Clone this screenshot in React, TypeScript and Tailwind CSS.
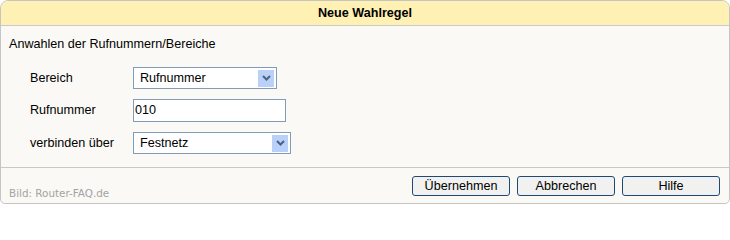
import React from 'react'

function ArrowBox() {
  return (
    <span className="w-[16px] h-[17px] bg-[#b9d1f9] flex items-center justify-center">
      <svg width="9" height="6" viewBox="0 0 9 6">
        <path d="M1 1 L4.5 4.5 L8 1" fill="none" stroke="#4d6185" strokeWidth="2" />
      </svg>
    </span>
  )
}

function FakeSelect({ value, width }: { value: string; width: string }) {
  return (
    <div
      className={`${width} h-[22px] border border-[#7f9db9] bg-white flex items-center justify-between pl-[6px] pr-[2px]`}
    >
      <span>{value}</span>
      <ArrowBox />
    </div>
  )
}

export default function App() {
  return (
    <div
      className="w-[730px] h-[204px] border border-[#c5c5c3] rounded-t-[8px] rounded-b-[5px] bg-[#faf9f5] flex flex-col overflow-hidden text-[12.6px] text-black"
      style={{ fontFamily: '"Liberation Sans", Arial, sans-serif' }}
    >
      {/* Header */}
      <div className="h-[25px] shrink-0 bg-[#fff0b3] border-b border-[#c8c8c6] flex items-center justify-center font-bold">
        Neue Wahlregel
      </div>

      {/* Body */}
      <div className="flex-1 pl-[8px] pt-[11px]">
        <p className="leading-[15px]">Anwahlen der Rufnummern/Bereiche</p>
        <div className="mt-[15px] pl-[21px] flex flex-col gap-[10px]">
          <div className="flex items-center">
            <span className="w-[103px]">Bereich</span>
            <FakeSelect value="Rufnummer" width="w-[144px]" />
          </div>
          <div className="flex items-center">
            <span className="w-[103px]">Rufnummer</span>
            <div className="w-[153px] h-[23px] border border-[#7f9db9] bg-white flex items-center pl-[1px]">
              010
            </div>
          </div>
          <div className="flex items-center">
            <span className="w-[103px]">verbinden über</span>
            <FakeSelect value="Festnetz" width="w-[158px]" />
          </div>
        </div>
      </div>

      {/* Footer */}
      <div className="h-[36px] shrink-0 border-t border-[#c8c8c6] flex pl-[8px] pr-[9px]">
        <span
          className="self-end pb-[1px] text-[10.4px] text-[#a3a3a3]"
          style={{ fontFamily: '"DejaVu Sans", Verdana, sans-serif' }}
        >
          Bild: Router-FAQ.de
        </span>
        <div className="ml-auto pt-[8px] flex gap-[7px]">
          {['Übernehmen', 'Abbrechen', 'Hilfe'].map((label) => (
            <button
              key={label}
              className="w-[98px] h-[20px] border border-[#1f4a78] rounded-[3px] bg-[#f1f1f0] flex items-center justify-center leading-none"
            >
              {label}
            </button>
          ))}
        </div>
      </div>
    </div>
  )
}
